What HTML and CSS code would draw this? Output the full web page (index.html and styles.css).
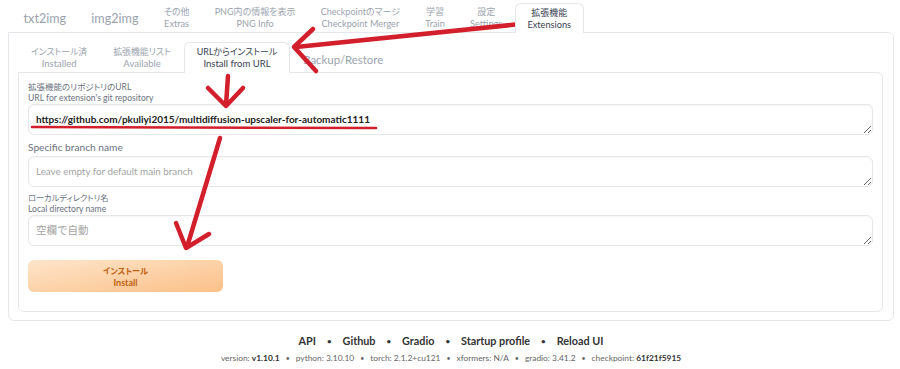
FILE: index.html
```html
<!DOCTYPE html>
<html lang="ja">
<head>
<meta charset="utf-8">
<title>Extensions</title>
<link rel="stylesheet" href="styles.css">
</head>
<body>
<div class="app">
  <nav class="tabs">
    <div class="tab single">txt2img</div>
    <div class="tab single">img2img</div>
    <div class="tab"><span class="ja">その他</span><span class="en">Extras</span></div>
    <div class="tab"><span class="ja">PNG内の情報を表示</span><span class="en">PNG Info</span></div>
    <div class="tab"><span class="ja">Checkpointのマージ</span><span class="en">Checkpoint Merger</span></div>
    <div class="tab"><span class="ja">学習</span><span class="en">Train</span></div>
    <div class="tab"><span class="ja">設定</span><span class="en">Settings</span></div>
    <div class="tab active"><span class="ja">拡張機能</span><span class="en">Extensions</span></div>
  </nav>
  <section class="panel">
    <nav class="subtabs">
      <div class="subtab"><span class="ja">インストール済</span><span class="en">Installed</span></div>
      <div class="subtab"><span class="ja">拡張機能リスト</span><span class="en">Available</span></div>
      <div class="subtab active"><span class="ja">URLからインストール</span><span class="en">Install from URL</span></div>
      <div class="subtab single">Backup/Restore</div>
    </nav>
    <div class="subpanel">
      <div class="field">
        <label class="label two"><span class="ja">拡張機能のリポジトリのURL</span><span class="en">URL for extension's git repository</span></label>
        <textarea class="input filled" rows="1">https://github.com/pkuliyi2015/multidiffusion-upscaler-for-automatic1111</textarea>
      </div>
      <div class="field">
        <label class="label one">Specific branch name</label>
        <textarea class="input" rows="1" placeholder="Leave empty for default main branch"></textarea>
      </div>
      <div class="field">
        <label class="label two local"><span class="ja">ローカルディレクトリ名</span><span class="en">Local directory name</span></label>
        <textarea class="input jp" rows="1" placeholder="空欄で自動"></textarea>
      </div>
      <button class="install"><span class="ja">インストール</span><span class="en">Install</span></button>
    </div>
  </section>
  <footer class="footer">
    <div class="links">
      <a>API</a><span class="dot">•</span><a>Github</a><span class="dot">•</span><a>Gradio</a><span class="dot">•</span><a>Startup profile</a><span class="dot">•</span><a>Reload UI</a>
    </div>
    <div class="versions">
      version: <b>v1.10.1</b><span class="dot">•</span>python: 3.10.10<span class="dot">•</span>torch: 2.1.2+cu121<span class="dot">•</span>xformers: N/A<span class="dot">•</span>gradio: 3.41.2<span class="dot">•</span>checkpoint: <b>61f21f5915</b>
    </div>
  </footer>
</div>
<svg class="annot" width="900" height="369" viewBox="0 0 900 369" xmlns="http://www.w3.org/2000/svg">
  <g fill="none" stroke="#d21f2b" stroke-linecap="round" stroke-linejoin="round">
    <path d="M521 24 L296 47" stroke-width="4.5"/>
    <path d="M313 29 L294 47 L316 71" stroke-width="4.5"/>
    <path d="M228 76 L226 105" stroke-width="4.5"/>
    <path d="M208 88 L226 106 L243 88" stroke-width="4.5"/>
    <path d="M32 127 L376 128" stroke-width="2.5"/>
    <path d="M220 138 L187 247" stroke-width="4.5"/>
    <path d="M176 223 L186 248 L209 234" stroke-width="4.5"/>
  </g>
</svg>
</body>
</html>
```
FILE: styles.css
```css
* { box-sizing: border-box; }
body {
  margin: 0;
  background: #fff;
  font-family: "Lato", "Noto Sans CJK JP", sans-serif;
  color: #374151;
}
.app { padding: 3px 6px 0 8px; }

.ja { font-feature-settings: "palt"; }

.tabs { display: flex; height: 29px; padding-left: 3px; }
.tab {
  display: flex; flex-direction: column; align-items: center; justify-content: center;
  padding: 0 11.6px;
  color: #9ca3af;
  border: 1px solid transparent; border-bottom: none;
  border-radius: 6px 6px 0 0;
  white-space: nowrap;
}
.tab.single { font-size: 12.6px; }
.tab .ja { font-size: 9px; line-height: 12px; }
.tab .en { font-size: 9.2px; line-height: 12px; }
.tab.active {
  border-color: #e5e7eb; background: #fff; color: #374151;
  height: 30px; margin-bottom: -1px; position: relative; z-index: 1;
}

.panel {
  border: 1px solid #e5e7eb;
  border-radius: 0 6px 6px 6px;
  padding: 9px 10px 8px 9px;
}
.subtabs { display: flex; height: 30px; }
.subtab {
  display: flex; flex-direction: column; align-items: center; justify-content: center;
  padding: 0 12px;
  color: #9ca3af;
  border: 1px solid transparent; border-bottom: none;
  border-radius: 6px 6px 0 0;
  white-space: nowrap;
}
.subtab .ja { font-size: 8.9px; line-height: 12px; }
.subtab .en { font-size: 9.5px; line-height: 12px; }
.subtab.single { font-size: 11.4px; padding-top: 3px; }
.subtab.active {
  border-color: #e5e7eb; color: #374151; background: #fff;
  height: 31px; margin-bottom: -1px; position: relative; z-index: 1;
}
.subpanel {
  border: 1px solid #e5e7eb;
  border-radius: 0 6px 6px 6px;
  padding: 9px 9px 19px 9px;
}
.field { display: flex; flex-direction: column; }
.label { display: flex; flex-direction: column; color: #6b7280; }
.label.two .ja { font-size: 8.5px; line-height: 11px; }
.label.two .en { font-size: 8.6px; line-height: 10px; margin-bottom: 1px; }
.label.local .ja { font-size: 8.2px; }
.label.one { font-size: 10.2px; line-height: 16px; margin: 4px 0 1px; }
.label.local { margin-top: 6px; }
.input {
  display: block; width: 100%;
  height: 31px;
  border: 1px solid #e5e7eb; border-radius: 6px;
  box-shadow: inset 0 1px 2px rgba(0,0,0,.04);
  padding: 7px 7px;
  font-family: inherit; font-size: 9.8px; line-height: 15px;
  color: #1f2937; resize: vertical; overflow: hidden;
}
.input.filled { font-weight: 700; font-size: 10px; color: #222; }
.input.jp { font-size: 10.5px; }
.input::placeholder { color: #a3a3a3; }

.install {
  display: flex; flex-direction: column; align-items: center; justify-content: center;
  width: 195px; height: 32px; margin-top: 14px;
  border: none; border-radius: 6px;
  background: linear-gradient(to bottom right, #fee5ca, #fbc088);
  color: #c15f12; font-family: inherit; font-weight: 700;
}
.install .ja { font-size: 8.2px; line-height: 12px; }
.install .en { font-size: 9px; line-height: 11px; }

.footer { text-align: center; padding-top: 12px; }
.links { font-size: 10.8px; font-weight: 700; color: #333; line-height: 15px; }
.links .dot { margin: 0 11px; font-size: 8px; vertical-align: 1px; }
.versions { font-size: 8.4px; color: #666; line-height: 13px; margin-top: 3px; }
.versions b { color: #333; }
.versions .dot { margin: 0 6px; font-size: 7px; }

.annot { position: absolute; left: 0; top: 0; pointer-events: none; }
```
